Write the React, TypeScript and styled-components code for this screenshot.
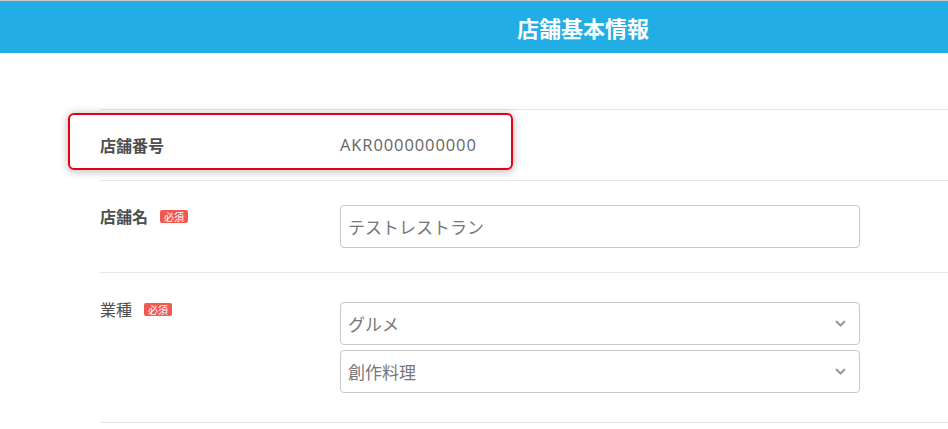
import styled, { createGlobalStyle } from "styled-components";

const GlobalStyle = createGlobalStyle`
  body {
    margin: 0;
    background: #fff;
    font-family: "Open Sans", "Noto Sans CJK JP", sans-serif;
  }
`;

const Header = styled.header`
  height: 52px;
  border-top: 1px solid #c9c9c9;
  background-color: #22aee4;
  padding-left: 218px;
  display: flex;
  align-items: center;
  justify-content: center;
  h1 {
    margin: 0;
    color: #fff;
    font-size: 22px;
    font-weight: 700;
    font-family: "Noto Sans CJK JP", sans-serif;
  }
`;

const Form = styled.div`
  padding: 56px 0 0 100px;
`;

const Row = styled.div<{ $pt: number; $pb: number }>`
  position: relative;
  display: flex;
  border-top: 1px solid #e6e6e6;
  padding: ${(p) => p.$pt}px 0 ${(p) => p.$pb}px;
  &:last-child {
    border-bottom: 1px solid #e6e6e6;
  }
`;

const Label = styled.div<{ $bold?: boolean; $center?: boolean; $shift?: number }>`
  flex: 0 0 240px;
  align-self: ${(p) => (p.$center ? "center" : "flex-start")};
  margin-top: ${(p) => p.$shift || 0}px;
  display: flex;
  align-items: center;
  gap: 12px;
  font-family: "Noto Sans CJK JP", sans-serif;
  font-size: 16px;
  font-weight: ${(p) => (p.$bold ? 700 : 400)};
  color: #4d4d4d;
  line-height: 22px;
`;

const Badge = styled.span`
  display: inline-block;
  background: #f05a4e;
  color: #fff;
  font-size: 10px;
  line-height: 13px;
  padding: 0 4px;
  border-radius: 2px;
  font-weight: 400;
  margin-top: 1px;
`;

const Value = styled.div`
  font-size: 16.5px;
  letter-spacing: 0.9px;
  color: #666;
  line-height: 22px;
`;

const Fields = styled.div`
  display: flex;
  flex-direction: column;
  gap: 5px;
`;

const Input = styled.div`
  box-sizing: border-box;
  width: 520px;
  height: 43px;
  border: 1px solid #c8c8c8;
  border-radius: 4px;
  display: flex;
  align-items: center;
  justify-content: space-between;
  padding: 0 13px 0 7px;
  font-family: "Noto Sans CJK JP", sans-serif;
  font-size: 17px;
  color: #777;
`;

const Highlight = styled.div`
  position: absolute;
  left: -32px;
  top: 3px;
  width: 445px;
  height: 57px;
  box-sizing: border-box;
  border: 2px solid #e60012;
  border-radius: 6px;
  box-shadow: 0 1px 10px rgba(0, 0, 0, 0.3);
  pointer-events: none;
`;

function Chevron() {
  return (
    <svg width="11" height="7" viewBox="0 0 11 7">
      <path d="M1 1l4.5 4.5L10 1" fill="none" stroke="#999" strokeWidth="2" />
    </svg>
  );
}

function App() {
  return (
    <>
      <GlobalStyle />
      <Header>
        <h1>店舗基本情報</h1>
      </Header>
      <Form>
        <Row $pt={24} $pb={24}>
          <Label $bold $center>店舗番号</Label>
          <Value>AKR0000000000</Value>
          <Highlight />
        </Row>
        <Row $pt={24} $pb={24}>
          <Label $bold>
            店舗名 <Badge>必須</Badge>
          </Label>
          <Input>テストレストラン</Input>
        </Row>
        <Row $pt={29} $pb={29}>
          <Label $shift={-4}>
            業種 <Badge>必須</Badge>
          </Label>
          <Fields>
            <Input>
              グルメ
              <Chevron />
            </Input>
            <Input>
              創作料理
              <Chevron />
            </Input>
          </Fields>
        </Row>
      </Form>
    </>
  );
}

export default App;
